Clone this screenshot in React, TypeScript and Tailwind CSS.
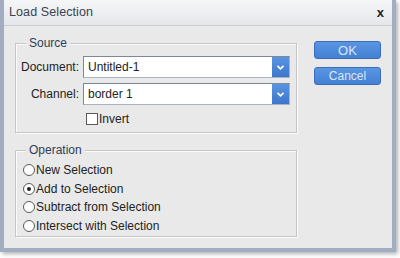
import React from "react";

const font = { fontFamily: '"Liberation Sans", Arial, sans-serif' };

function Dropdown({ value }: { value: string }) {
  return (
    <div className="flex h-[22px] w-[207px] border border-[#7b879a] border-b-[#aab3c2] border-r-[#aab3c2] bg-white">
      <div className="flex-1 pl-[4px] text-[12px] leading-[20px] text-[#222]">{value}</div>
      <div className="flex w-[17px] items-center justify-center bg-gradient-to-b from-[#5a93e0] to-[#3d77cc]">
        <svg width="7" height="5" viewBox="0 0 7 5">
          <path d="M0.5 0.8 L3.5 3.8 L6.5 0.8" stroke="white" strokeWidth="1.6" fill="none" />
        </svg>
      </div>
    </div>
  );
}

function Radio({ label, checked }: { label: string; checked?: boolean }) {
  return (
    <div className="flex h-[18.5px] items-center">
      <span className="flex h-[12px] w-[12px] items-center justify-center rounded-full border border-[#5a5a5a] bg-white">
        {checked && <span className="h-[4px] w-[4px] rounded-full bg-[#222]" />}
      </span>
      <span className="ml-[1px] text-[12px] text-[#222]">{label}</span>
    </div>
  );
}

function Group({ title, children, className }: { title: string; children: React.ReactNode; className: string }) {
  return (
    <div className={"relative ml-[11px] w-[282px] border border-[#c6c6c6] shadow-[inset_1px_1px_0_#fbfbfb,1px_1px_0_#fbfbfb] " + className}>
      <span className="absolute left-[10px] top-[-9px] bg-[#e9e9e9] px-[3px] text-[12px] leading-[16px] text-[#2e3e54]">
        {title}
      </span>
      {children}
    </div>
  );
}

export default function App() {
  return (
    <div className="h-[258px] w-[400px] bg-white" style={font}>
      <div className="flex h-[252px] w-[396px] flex-col border-x-4 border-b-4 border-[#a3adc2] shadow-[2px_2px_4px_rgba(0,0,0,0.3)]">
        <div className="flex h-[26px] items-center justify-between border-b border-[#c9cdd4] bg-gradient-to-b from-[#f5f6f8] to-[#e5e7eb] pl-[5px] pr-[8px]">
          <span className="text-[12.5px] tracking-[0.1px] text-[#3a4350]">Load Selection</span>
          <span className="text-[13px] font-bold leading-none text-[#222]">x</span>
        </div>
        <div className="flex flex-1 bg-[#e9e9e9]">
          <div className="flex flex-col">
            <Group title="Source" className="mt-[17px] h-[90px]">
              <div className="mt-[12px] flex items-center">
                <span className="w-[63px] text-right text-[12px] text-[#222]">Document:</span>
                <span className="ml-[4px]">
                  <Dropdown value="Untitled-1" />
                </span>
              </div>
              <div className="mt-[5px] flex items-center">
                <span className="w-[63px] text-right text-[12px] text-[#222]">Channel:</span>
                <span className="ml-[4px]">
                  <Dropdown value="border 1" />
                </span>
              </div>
              <div className="ml-[70px] mt-[8px] flex items-center">
                <span className="h-[12px] w-[12px] border border-[#5a5a5a] bg-white" />
                <span className="ml-[1px] text-[12px] leading-[12px] text-[#222]">Invert</span>
              </div>
            </Group>
            <Group title="Operation" className="mt-[17px] h-[87px] pl-[7px] pt-[10px]">
              <Radio label="New Selection" />
              <Radio label="Add to Selection" checked />
              <Radio label="Subtract from Selection" />
              <Radio label="Intersect with Selection" />
            </Group>
          </div>
          <div className="ml-[17px] mt-[15px] flex flex-col gap-[8px]">
            <button className="h-[18px] w-[67px] rounded-[3px] border border-[#3b6dbf] bg-gradient-to-b from-[#5a95e2] to-[#4481d4] text-[13px] leading-none text-[#dce8f8]">
              OK
            </button>
            <button className="h-[18px] w-[67px] rounded-[3px] border border-[#3b6dbf] bg-gradient-to-b from-[#5a95e2] to-[#4481d4] text-[12px] leading-none text-[#dce8f8]">
              Cancel
            </button>
          </div>
        </div>
      </div>
    </div>
  );
}
